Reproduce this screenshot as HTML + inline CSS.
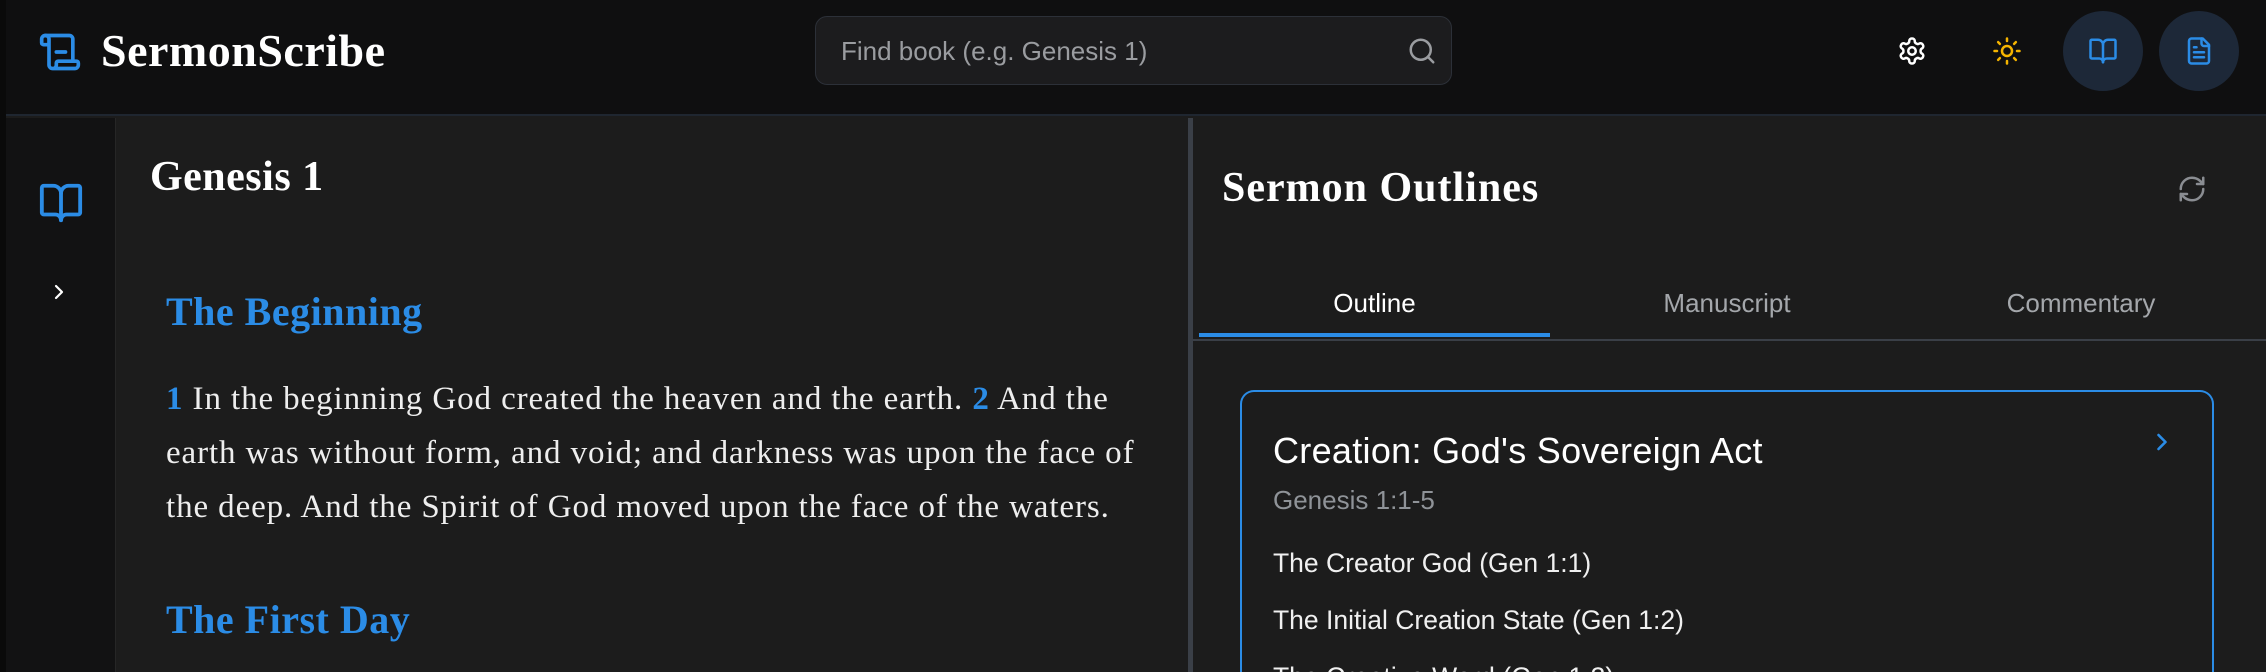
<!DOCTYPE html>
<html style="overflow:hidden;width:2266px;height:672px"><head><meta charset="utf-8"><style>
*{margin:0;padding:0;box-sizing:border-box}
body{width:2266px;height:672px;overflow:hidden;background:#1c1c1c;font-family:"Liberation Sans",sans-serif;color:#fff}
#w{position:relative;width:2266px;height:672px;overflow:hidden}
.abs{position:absolute}
.serif{font-family:"Liberation Serif",serif;font-weight:bold}
</style></head><body><div id="w">
<div class="abs" style="left:0;top:0;width:2266px;height:116px;background:#0f0f10;border-bottom:2px solid #1f2630"></div>
<div class="abs" style="left:0;top:0;width:6px;height:672px;background:#0a0a0a"></div>
<svg class="abs" style="left:38px;top:30px" width="44" height="44" viewBox="0 0 24 24" fill="none" stroke="#2b8ce6" stroke-width="2" stroke-linecap="round" stroke-linejoin="round"><path d="M15 12h-5"/><path d="M19 17V5a2 2 0 0 0-2-2H4"/><path d="M8 21h12a2 2 0 0 0 2-2v-1a1 1 0 0 0-1-1H11a1 1 0 0 0-1 1v1a2 2 0 1 1-4 0V5a2 2 0 1 0-4 0v2a1 1 0 0 0 1 1h3"/></svg>
<div class="abs serif" style="left:101px;top:25px;font-size:46px;line-height:52px;letter-spacing:0.5px">SermonScribe</div>
<div class="abs" style="left:815px;top:16px;width:637px;height:69px;background:#1c1c1e;border:1.5px solid #2c3038;border-radius:12px"></div>
<div class="abs" style="left:841px;top:36px;font-size:26px;line-height:30px;color:#9a9ca0">Find book (e.g. Genesis 1)</div>
<svg class="abs" style="left:1407px;top:36px" width="30" height="30" viewBox="0 0 24 24" fill="none" stroke="#9a9ca0" stroke-width="2" stroke-linecap="round"><circle cx="11" cy="11" r="8"/><path d="m21 21-4.3-4.3"/></svg>
<svg class="abs" style="left:1897px;top:36px" width="30" height="30" viewBox="0 0 24 24" fill="none" stroke="#fff" stroke-width="2" stroke-linecap="round" stroke-linejoin="round"><path d="M12.22 2h-.44a2 2 0 0 0-2 2v.18a2 2 0 0 1-1 1.73l-.43.25a2 2 0 0 1-2 0l-.15-.08a2 2 0 0 0-2.73.73l-.22.38a2 2 0 0 0 .73 2.73l.15.1a2 2 0 0 1 1 1.72v.51a2 2 0 0 1-1 1.74l-.15.09a2 2 0 0 0-.73 2.73l.22.38a2 2 0 0 0 2.73.73l.15-.08a2 2 0 0 1 2 0l.43.25a2 2 0 0 1 1 1.73V20a2 2 0 0 0 2 2h.44a2 2 0 0 0 2-2v-.18a2 2 0 0 1 1-1.73l.43-.25a2 2 0 0 1 2 0l.15.08a2 2 0 0 0 2.73-.73l.22-.39a2 2 0 0 0-.73-2.73l-.15-.08a2 2 0 0 1-1-1.74v-.5a2 2 0 0 1 1-1.74l.15-.09a2 2 0 0 0 .73-2.73l-.22-.38a2 2 0 0 0-2.73-.73l-.15.08a2 2 0 0 1-2 0l-.43-.25a2 2 0 0 1-1-1.73V4a2 2 0 0 0-2-2z"/><circle cx="12" cy="12" r="3"/></svg>
<svg class="abs" style="left:1992px;top:36px" width="30" height="30" viewBox="0 0 24 24" fill="none" stroke="#f5b400" stroke-width="2" stroke-linecap="round"><circle cx="12" cy="12" r="4"/><path d="M12 2v2M12 20v2M4.9 4.9l1.4 1.4M17.7 17.7l1.4 1.4M2 12h2M20 12h2M6.3 17.7l-1.4 1.4M19.1 4.9l-1.4 1.4"/></svg>
<div class="abs" style="left:2063px;top:11px;width:80px;height:80px;border-radius:50%;background:#1d2838"></div>
<svg class="abs" style="left:2088px;top:36px" width="30" height="30" viewBox="0 0 24 24" fill="none" stroke="#2b8ce6" stroke-width="2" stroke-linecap="round" stroke-linejoin="round"><path d="M12 7v14"/><path d="M3 18a1 1 0 0 1-1-1V4a1 1 0 0 1 1-1h5a4 4 0 0 1 4 4 4 4 0 0 1 4-4h5a1 1 0 0 1 1 1v13a1 1 0 0 1-1 1h-6a3 3 0 0 0-3 3 3 3 0 0 0-3-3z"/></svg>
<div class="abs" style="left:2159px;top:11px;width:80px;height:80px;border-radius:50%;background:#1d2838"></div>
<svg class="abs" style="left:2184px;top:36px" width="30" height="30" viewBox="0 0 24 24" fill="none" stroke="#2b8ce6" stroke-width="2" stroke-linecap="round" stroke-linejoin="round"><path d="M15 2H6a2 2 0 0 0-2 2v16a2 2 0 0 0 2 2h12a2 2 0 0 0 2-2V7z"/><path d="M14 2v4a2 2 0 0 0 2 2h4"/><path d="M10 9H8M16 13H8M16 17H8"/></svg>
<div class="abs" style="left:6px;top:118px;width:110px;height:554px;background:#121213;border-right:1px solid #262626"></div>
<svg class="abs" style="left:38px;top:180px" width="46" height="46" viewBox="0 0 24 24" fill="none" stroke="#2b8ce6" stroke-width="2" stroke-linecap="round" stroke-linejoin="round"><path d="M12 7v14"/><path d="M3 18a1 1 0 0 1-1-1V4a1 1 0 0 1 1-1h5a4 4 0 0 1 4 4 4 4 0 0 1 4-4h5a1 1 0 0 1 1 1v13a1 1 0 0 1-1 1h-6a3 3 0 0 0-3 3 3 3 0 0 0-3-3z"/></svg>
<svg class="abs" style="left:47px;top:280px" width="24" height="24" viewBox="0 0 24 24" fill="none" stroke="#fff" stroke-width="2.2" stroke-linecap="round" stroke-linejoin="round"><path d="m9 18 6-6-6-6"/></svg>
<div class="abs" style="left:1188px;top:118px;width:5px;height:554px;background:#3a3f47"></div>
<div class="abs serif" style="left:150px;top:153px;font-size:42px;line-height:48px;letter-spacing:0.5px">Genesis 1</div>
<div class="abs serif" style="left:166px;top:289px;font-size:40px;line-height:46px;letter-spacing:0.5px;color:#2b8ce6">The Beginning</div>
<div class="abs" style="left:166px;top:372px;font-family:'Liberation Serif',serif;font-size:33px;letter-spacing:0.9px;line-height:54px;color:#eee;white-space:nowrap">
<div><b style="color:#2b8ce6">1</b> In the beginning God created the heaven and the earth. <b style="color:#2b8ce6">2</b> And the</div>
<div>earth was without form, and void; and darkness was upon the face of</div>
<div>the deep. And the Spirit of God moved upon the face of the waters.</div></div>
<div class="abs serif" style="left:166px;top:597px;font-size:40px;line-height:46px;letter-spacing:0.5px;color:#2b8ce6">The First Day</div>
<div class="abs serif" style="left:1222px;top:164px;font-size:42px;line-height:48px;letter-spacing:1px">Sermon Outlines</div>
<svg class="abs" style="left:2177px;top:174px" width="30" height="30" viewBox="0 0 24 24" fill="none" stroke="#8a8d92" stroke-width="2" stroke-linecap="round" stroke-linejoin="round"><path d="M3 12a9 9 0 0 1 9-9 9.75 9.75 0 0 1 6.74 2.74L21 8"/><path d="M21 3v5h-5"/><path d="M21 12a9 9 0 0 1-9 9 9.75 9.75 0 0 1-6.74-2.74L3 16"/><path d="M8 16H3v5"/></svg>
<div class="abs" style="left:1199px;top:288px;width:351px;text-align:center;font-size:26px;line-height:30px;color:#fff">Outline</div>
<div class="abs" style="left:1550px;top:288px;width:354px;text-align:center;font-size:26px;line-height:30px;color:#a4a7ab">Manuscript</div>
<div class="abs" style="left:1904px;top:288px;width:354px;text-align:center;font-size:26px;line-height:30px;color:#a4a7ab">Commentary</div>
<div class="abs" style="left:1193px;top:339px;width:1073px;height:2px;background:#3a3f47"></div>
<div class="abs" style="left:1199px;top:333px;width:351px;height:4px;background:#2b8ce6"></div>
<div class="abs" style="left:1240px;top:390px;width:974px;height:282px;border:2px solid #2b8ce6;border-bottom:none;border-radius:14px 14px 0 0"></div>
<div class="abs" style="left:1273px;top:430px;font-size:36px;line-height:42px;letter-spacing:0.3px">Creation: God's Sovereign Act</div>
<svg class="abs" style="left:2148px;top:428px" width="28" height="28" viewBox="0 0 24 24" fill="none" stroke="#2b8ce6" stroke-width="2.2" stroke-linecap="round" stroke-linejoin="round"><path d="m9 18 6-6-6-6"/></svg>
<div class="abs" style="left:1273px;top:485px;font-size:26px;line-height:30px;color:#8f9398">Genesis 1:1-5</div>
<div class="abs" style="left:1273px;top:535px;height:137px;overflow:hidden;font-size:26.5px;line-height:57px;color:#f0f0f0;white-space:nowrap">
<div>The Creator God (Gen 1:1)</div><div>The Initial Creation State (Gen 1:2)</div><div>The Creative Word (Gen 1:3)</div></div>
</div></body></html>
